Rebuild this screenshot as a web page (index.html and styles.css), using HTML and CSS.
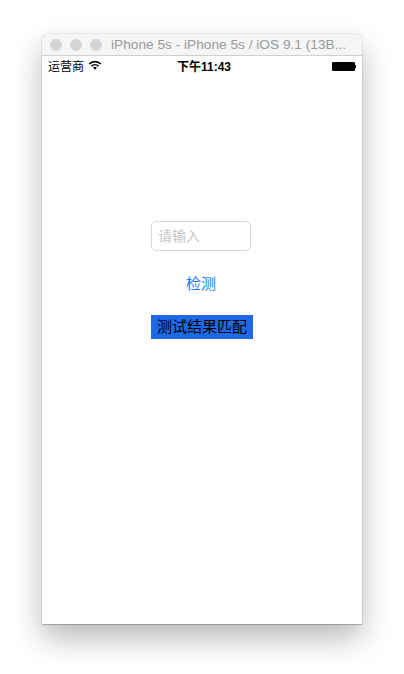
FILE: index.html
```html
<!DOCTYPE html>
<html lang="zh-CN">
<head>
  <meta charset="UTF-8" />
  <meta name="viewport" content="width=device-width, initial-scale=1.0"/>
  <title>iPhone 5s - iOS 9.1</title>
  <link rel="stylesheet" href="styles.css">
</head>
<body>

  <div class="window">
    <!-- Simulator title bar -->
    <div class="titlebar">
      <span class="light"></span>
      <span class="light"></span>
      <span class="light"></span>
      <span class="title">iPhone 5s - iPhone 5s / iOS 9.1 (13B...</span>
    </div>

    <!-- Status bar -->
    <div class="statusbar">
      <div class="carrier">
        <span>运营商</span>
        <svg class="wifi" width="14" height="10" viewBox="0 0 14 10">
          <path d="M0.6 3.4 A9 9 0 0 1 13.4 3.4 L12.2 4.6 A7.3 7.3 0 0 0 1.8 4.6 Z" fill="#000"/>
          <path d="M2.9 5.6 A5.8 5.8 0 0 1 11.1 5.6 L9.9 6.8 A4.1 4.1 0 0 0 4.1 6.8 Z" fill="#000"/>
          <path d="M5.1 7.8 A2.7 2.7 0 0 1 8.9 7.8 L7 9.8 Z" fill="#000"/>
        </svg>
      </div>
      <div class="time">下午11:43</div>
      <div class="battery">
        <span class="battery-body"></span>
        <span class="battery-tip"></span>
      </div>
    </div>

    <!-- Main content -->
    <div class="content">
      <input class="field" type="text" placeholder="请输入" />
      <a class="check" href="#">检测</a>
      <div class="result">测试结果匹配</div>
    </div>
  </div>

</body>
</html>
```

FILE: styles.css
```css
html, body {
  height: 100%;
}

body {
  margin: 0;
  padding: 34px 42px 0;
  box-sizing: border-box;
  background: #fff;
  overflow: hidden;
  font-family: "Liberation Sans", "Noto Sans CJK SC", sans-serif;
  color: #000;
}

.window {
  width: 320px;
  height: 590px;
  background: #fff;
  border-radius: 5px 5px 0 0;
  box-shadow: 0 0 1px rgba(0, 0, 0, 0.5), 0 1px 1px rgba(0, 0, 0, 0.2), 0 14px 30px rgba(0, 0, 0, 0.28);
  display: flex;
  flex-direction: column;
}

/* Title bar */
.titlebar {
  height: 22px;
  flex-shrink: 0;
  box-sizing: border-box;
  padding-left: 8px;
  display: flex;
  align-items: center;
  gap: 8px;
  background: #f5f5f5;
  border-bottom: 1px solid #cfcfcf;
  border-radius: 5px 5px 0 0;
}

.light {
  width: 12px;
  height: 12px;
  border-radius: 50%;
  background: #d4d4d4;
}

.title {
  margin-left: 1px;
  font-size: 13.7px;
  color: #9a9a9a;
  white-space: nowrap;
  font-family: "Liberation Sans", sans-serif;
}

/* Status bar */
.statusbar {
  height: 18px;
  flex-shrink: 0;
  padding: 0 6px;
  display: grid;
  grid-template-columns: 1fr auto 1fr;
  align-items: center;
  font-size: 12px;
}

.carrier {
  display: flex;
  align-items: center;
  gap: 4px;
}

.time {
  font-weight: bold;
  font-size: 12px;
  margin-left: 4px;
}

.battery {
  display: flex;
  align-items: center;
  justify-content: flex-end;
  margin-top: 2px;
}

.battery-body {
  width: 21px;
  height: 7px;
  background: #000;
  border: 1px solid #000;
  border-radius: 1px;
}

.battery-tip {
  width: 1px;
  height: 3px;
  background: #000;
}

/* Main content */
.content {
  display: flex;
  flex-direction: column;
  align-items: center;
  padding: 147px 2px 0 0;
}

.field {
  width: 100px;
  height: 30px;
  box-sizing: border-box;
  padding: 0 6px;
  border: 1px solid #d9d9d9;
  border-radius: 5px;
  font-size: 14px;
  font-family: inherit;
  outline: none;
}

.field::placeholder {
  color: #c4c4c8;
}

.check {
  margin-top: 23px;
  font-size: 15px;
  line-height: 20px;
  color: #1a7cf0;
  text-decoration: none;
}

.result {
  margin: 21px 0 0 2px;
  width: 102px;
  height: 24px;
  line-height: 24px;
  text-align: center;
  font-size: 15px;
  background: #1e69e6;
  color: #000;
}
```
